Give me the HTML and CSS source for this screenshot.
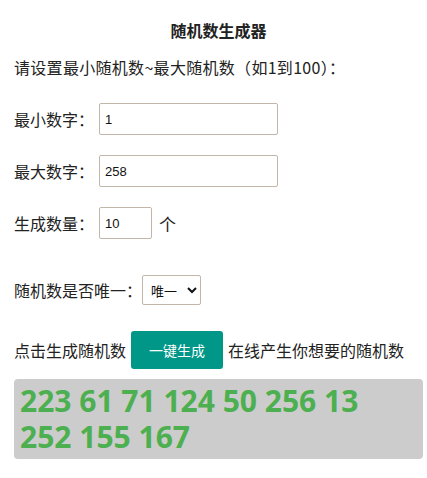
FILE: index.html
```html
<!DOCTYPE html>
<html lang="zh-CN">
<head>
  <meta charset="UTF-8" />
  <meta name="viewport" content="width=device-width, initial-scale=1.0"/>
  <title>随机数生成器</title>
  <link rel="stylesheet" href="styles.css">
</head>
<body>

<div class="wrap">
  <h3 class="title">随机数生成器</h3>
  <p class="tip">请设置最小随机数~最大随机数（如1到100）：</p>

  <div class="row">
    <label>最小数字：</label>
    <input type="text" class="num" id="min" value="1">
  </div>
  <div class="row">
    <label>最大数字：</label>
    <input type="text" class="num" id="max" value="258">
  </div>
  <div class="row">
    <label>生成数量：</label>
    <input type="text" class="count" id="count" value="10">
    <span class="unit">个</span>
  </div>

  <div class="row row-select">
    <label>随机数是否唯一：</label>
    <select id="unique">
      <option value="1">唯一</option>
      <option value="0">可重复</option>
    </select>
  </div>

  <div class="row row-btn">
    <span>点击生成随机数</span>
    <button class="go" onclick="generate()">一键生成</button>
    <span>在线产生你想要的随机数</span>
  </div>

  <div class="result" id="result">223 61 71 124 50 256 13 252 155 167</div>
</div>

<script>
function generate() {
  const min = parseInt(document.getElementById('min').value, 10);
  const max = parseInt(document.getElementById('max').value, 10);
  const count = parseInt(document.getElementById('count').value, 10);
  const unique = document.getElementById('unique').value === '1';
  let list = [];
  let tries = 0;
  while (list.length < count && tries < 10000) {
    tries++;
    const n = Math.floor(Math.random() * (max - min + 1)) + min;
    if (unique && list.indexOf(n) !== -1) continue;
    list.push(n);
  }
  document.getElementById('result').innerText = list.join(' ');
}
</script>

</body>
</html>
```

FILE: styles.css
```css
body {
  margin: 0;
  font-family: "Noto Sans CJK SC", "Noto Sans", sans-serif;
  font-size: 16px;
  color: #222;
  background: #fff;
}
.wrap {
  padding: 0 4px 0 14px;
}
.title {
  margin: 0;
  padding-top: 18px;
  text-align: center;
  font-size: 16px;
  font-weight: bold;
  line-height: 24px;
}
.tip {
  margin: 13px 0 0;
  line-height: 24px;
  letter-spacing: 0.3px;
}
.row {
  display: flex;
  align-items: center;
  height: 32px;
  margin-top: 20px;
}
.row:first-of-type {
  margin-top: 24px;
}
.row label {
  width: 85px;
}
.num, .count {
  box-sizing: border-box;
  height: 32px;
  padding: 0 5px;
  border: 1px solid #c2b6ab;
  border-radius: 2px;
  font-family: "Liberation Sans", Arial, sans-serif;
  font-size: 13px;
  color: #111;
}
.num { width: 179px; }
.count { width: 53px; }
.unit {
  margin-left: 7px;
  font-size: 17px;
}
.row-select {
  margin-top: 36px;
  height: 30px;
}
.row-select label {
  width: auto;
}
select {
  box-sizing: border-box;
  height: 30px;
  width: 59px;
  padding: 0 4px;
  border: 1px solid #c2b6ab;
  border-radius: 2px;
  background: #fff;
  font-family: "Noto Sans CJK SC", sans-serif;
  font-size: 13px;
  color: #111;
}
.row-btn {
  margin-top: 26px;
  height: 38px;
}
.go {
  margin: 0 5px;
  height: 38px;
  width: 92px;
  border: none;
  border-radius: 3px;
  background: #009688;
  color: #fff;
  font-family: "Noto Sans CJK SC", sans-serif;
  font-size: 14px;
  cursor: pointer;
}
.result {
  margin-top: 10px;
  padding: 4px 6px 4px;
  background: #cccccc;
  border-radius: 4px;
  color: #4caf50;
  font-family: "Open Sans", "Noto Sans", sans-serif;
  font-weight: bold;
  font-size: 30px;
  line-height: 36px;
}
```
